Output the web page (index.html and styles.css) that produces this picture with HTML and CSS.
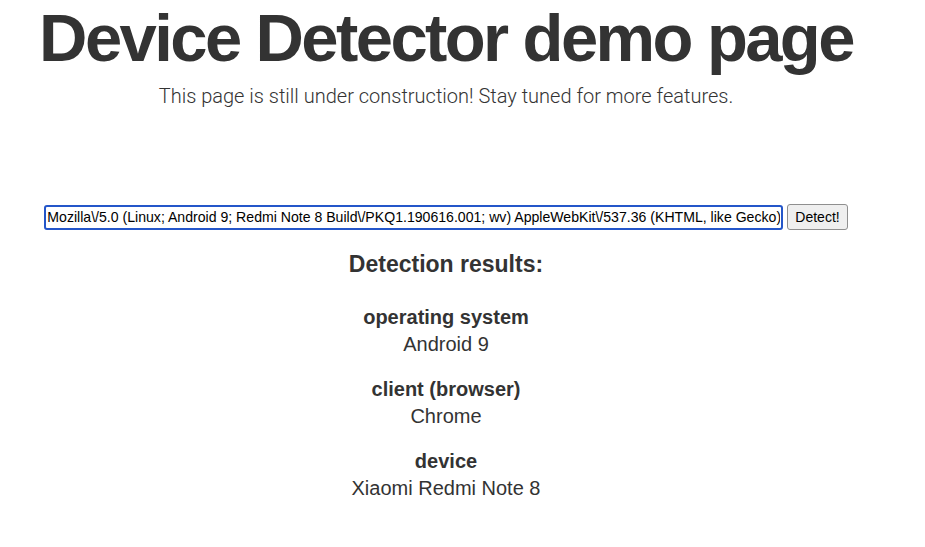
FILE: index.html
```html
<!doctype html>
<html>
<head>
<meta charset="utf-8">
<title>Device Detector demo page</title>
<link rel="stylesheet" href="styles.css">
</head>
<body>
<div class="page">
    <h1 class="title">Device Detector demo page</h1>
    <p class="lead">This page is still under construction! Stay tuned for more features.</p>

    <form class="detect" onsubmit="return false;">
        <input type="text" class="ua" value="Mozilla\/5.0 (Linux; Android 9; Redmi Note 8 Build\/PKQ1.190616.001; wv) AppleWebKit\/537.36 (KHTML, like Gecko) Version\/4.0 Chrome\/78.0.3904.108 Mobile Safari\/537.36" autofocus>
        <button type="submit" class="go">Detect!</button>
    </form>

    <div class="results">
        <h2>Detection results:</h2>
        <dl>
            <dt>operating system</dt>
            <dd>Android 9</dd>
            <dt>client (browser)</dt>
            <dd>Chrome</dd>
            <dt>device</dt>
            <dd>Xiaomi Redmi Note 8</dd>
        </dl>
    </div>
</div>
<script>
// keep the caret at the start, like a freshly focused field
var oUa = document.querySelector('.ua');
oUa.focus();
oUa.setSelectionRange(0,0);
oUa.scrollLeft = 0;
</script>
</body>
</html>
```

FILE: styles.css
```css
body,h1,h2,p,dl,dt,dd,form{margin:0; padding:0;}
body{
	font-family:"Liberation Sans", Arial, sans-serif;
	color:#333;
	background:#fff;
}
.page{
	width:892px;
	text-align:center;
}
.title{
	font-size:67px;
	line-height:76px;
	letter-spacing:-2.6px;
	font-weight:bold;
	white-space:nowrap;
}
.lead{
	margin-top:6px;
	font-family:Roboto, "Liberation Sans", sans-serif;
	font-weight:300;
	font-size:20px;
	line-height:28px;
}

.detect{
	display:flex;
	justify-content:center;
	align-items:center;
	gap:4px;
	margin-top:94px;
}
.ua{
	width:739px;
	height:25px;
	box-sizing:border-box;
	padding:0 1px;
	font-family:"Liberation Sans", Arial, sans-serif;
	font-size:14.1px;
	color:#000;
	border:2px solid #2456c9;
	border-radius:3px;
	outline:none;
}
.go{
	height:26px;
	padding:0 7px;
	font-family:"Liberation Sans", Arial, sans-serif;
	font-size:14px;
	color:#000;
	background:#efefef;
	border:1px solid #8f8f8f;
	border-radius:3px;
}

.results h2{
	margin-top:17px;
	font-size:23px;
	line-height:34px;
	font-weight:bold;
}
.results dl{
	margin-top:23px;
	font-size:20px;
	line-height:27px;
}
.results dt{
	font-weight:bold;
}
.results dd{
	margin-bottom:18px;
}
```
